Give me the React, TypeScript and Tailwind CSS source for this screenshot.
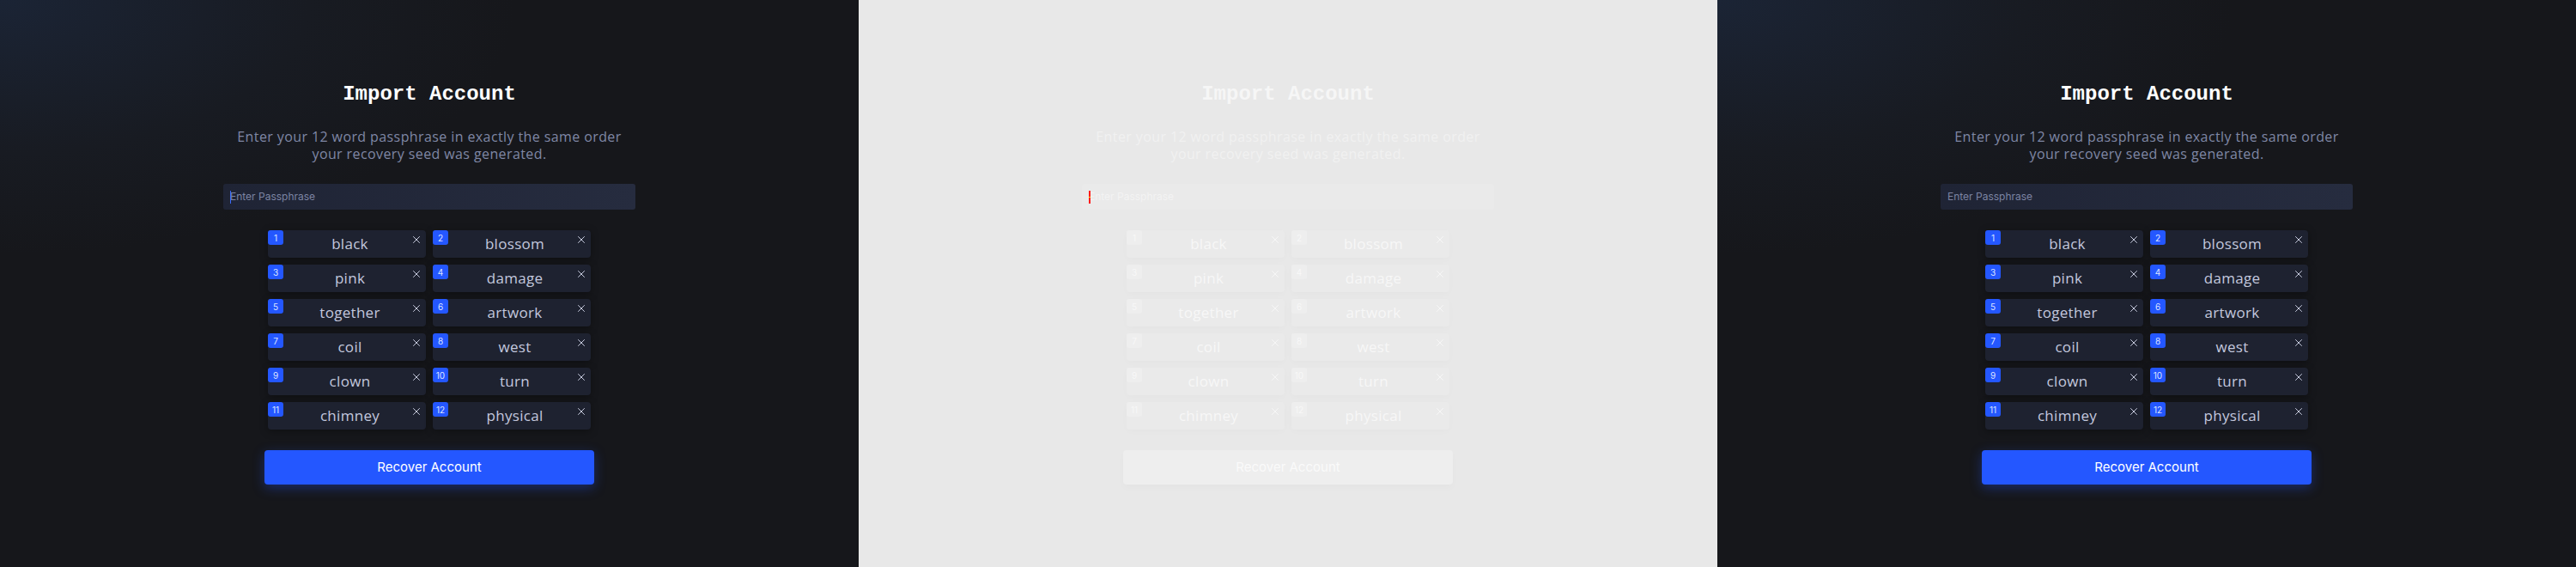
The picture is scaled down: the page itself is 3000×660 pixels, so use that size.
import { X } from 'lucide-react';

const words = [
    'black', 'blossom', 'pink', 'damage', 'together', 'artwork',
    'coil', 'west', 'clown', 'turn', 'chimney', 'physical',
];

type Variant = 'dark' | 'light' | 'plain';

function ImportPanel({ variant }: { variant: Variant }) {
    const light = variant === 'light';

    return (
        <section
            className={`w-[1000px] h-[660px] shrink-0 flex flex-col items-center ${light
                ? 'bg-[#e8e8e8]'
                : 'bg-[radial-gradient(ellipse_60%_45%_at_0%_0%,#1b2435_0%,#181b22_60%,#16171b_100%)]'
                }`}
        >
            {/* title */}
            <h1
                className={`mt-[94px] h-[32px] leading-[32px] text-[24px] font-bold font-['Liberation_Mono',monospace] ${light ? 'text-[#f6f6f6]' : 'text-white'
                    }`}
            >
                Import Account
            </h1>

            {/* subtitle */}
            <p
                className={`mt-[23px] text-center text-[16px] leading-[20px] tracking-[0.4px] font-['Open_Sans',sans-serif] ${light ? 'text-[#f1f1f1]' : 'text-[#7f87a5]'
                    }`}
            >
                Enter your 12 word passphrase in exactly the same order
                <br />
                your recovery seed was generated.
            </p>

            {/* passphrase input */}
            <div
                className={`relative mt-[25px] w-[480px] h-[30px] rounded-[3px] flex items-center pl-[8px] ${light
                    ? 'bg-[#eaeaea]'
                    : 'bg-[linear-gradient(90deg,#1f2435,#262c3f)]'
                    }`}
            >
                {variant === 'dark' && (
                    <span className="absolute left-[8px] top-[8px] w-px h-[15px] bg-[#3b6bff]" />
                )}
                {light && (
                    <span className="absolute left-[8px] top-[8px] w-[2px] h-[15px] bg-[linear-gradient(#ff1a1a_0%,#ff1a1a_45%,#f5e400_45%,#f5e400_55%,#ff1a1a_55%)]" />
                )}
                <span
                    className={`text-[12px] font-['Inter',sans-serif] ${light ? 'text-[#f3f3f3]' : 'text-[#7c84a3]'
                        }`}
                >
                    Enter Passphrase
                </span>
            </div>

            {/* word grid */}
            <div className="mt-[24px] grid grid-cols-[184px_184px] gap-[8px]">
                {words.map((word, i) => (
                    <div
                        key={word}
                        className={`h-[32px] rounded-[4px] flex items-start ${light
                            ? 'bg-[#eaeaea] shadow-[0_2px_8px_rgba(0,0,0,0.02)]'
                            : 'bg-[#1e2230] shadow-[0_2px_10px_rgba(0,0,0,0.35)]'
                            }`}
                    >
                        <span
                            className={`w-[18px] h-[17px] rounded-[3px] flex items-center justify-center text-[10px] leading-none font-['Inter',sans-serif] ${light ? 'bg-[#eeeeee] text-[#f8f8f8]' : 'bg-[#2457ff] text-[#dde4ff]'
                                }`}
                        >
                            {i + 1}
                        </span>
                        <span
                            className={`flex-1 self-center pl-[7px] text-center text-[17px] leading-[22px] tracking-[0.3px] font-['Open_Sans',sans-serif] ${light ? 'text-[#f7f7f7]' : 'text-[#c3c8de]'
                                }`}
                        >
                            {word}
                        </span>
                        <X
                            size={14}
                            strokeWidth={1.7}
                            className={`mt-[4px] mr-[4px] ${light ? 'text-[#f7f7f7]' : 'text-[#c8cce0]'}`}
                        />
                    </div>
                ))}
            </div>

            {/* submit */}
            <button
                className={`mt-[24px] w-[384px] h-[40px] rounded-[4px] text-[15px] font-['Inter',sans-serif] ${light
                    ? 'bg-[#eeeeee] text-[#fafafa] shadow-[0_4px_10px_rgba(0,0,0,0.02)]'
                    : 'bg-[#2457ff] text-white shadow-[0_4px_14px_rgba(36,87,255,0.35)]'
                    }`}
            >
                Recover Account
            </button>
        </section>
    );
}

export default function App() {
    return (
        <main className="flex w-[3000px] h-[660px] overflow-hidden">
            <ImportPanel variant="dark" />
            <ImportPanel variant="light" />
            <ImportPanel variant="plain" />
        </main>
    );
}
